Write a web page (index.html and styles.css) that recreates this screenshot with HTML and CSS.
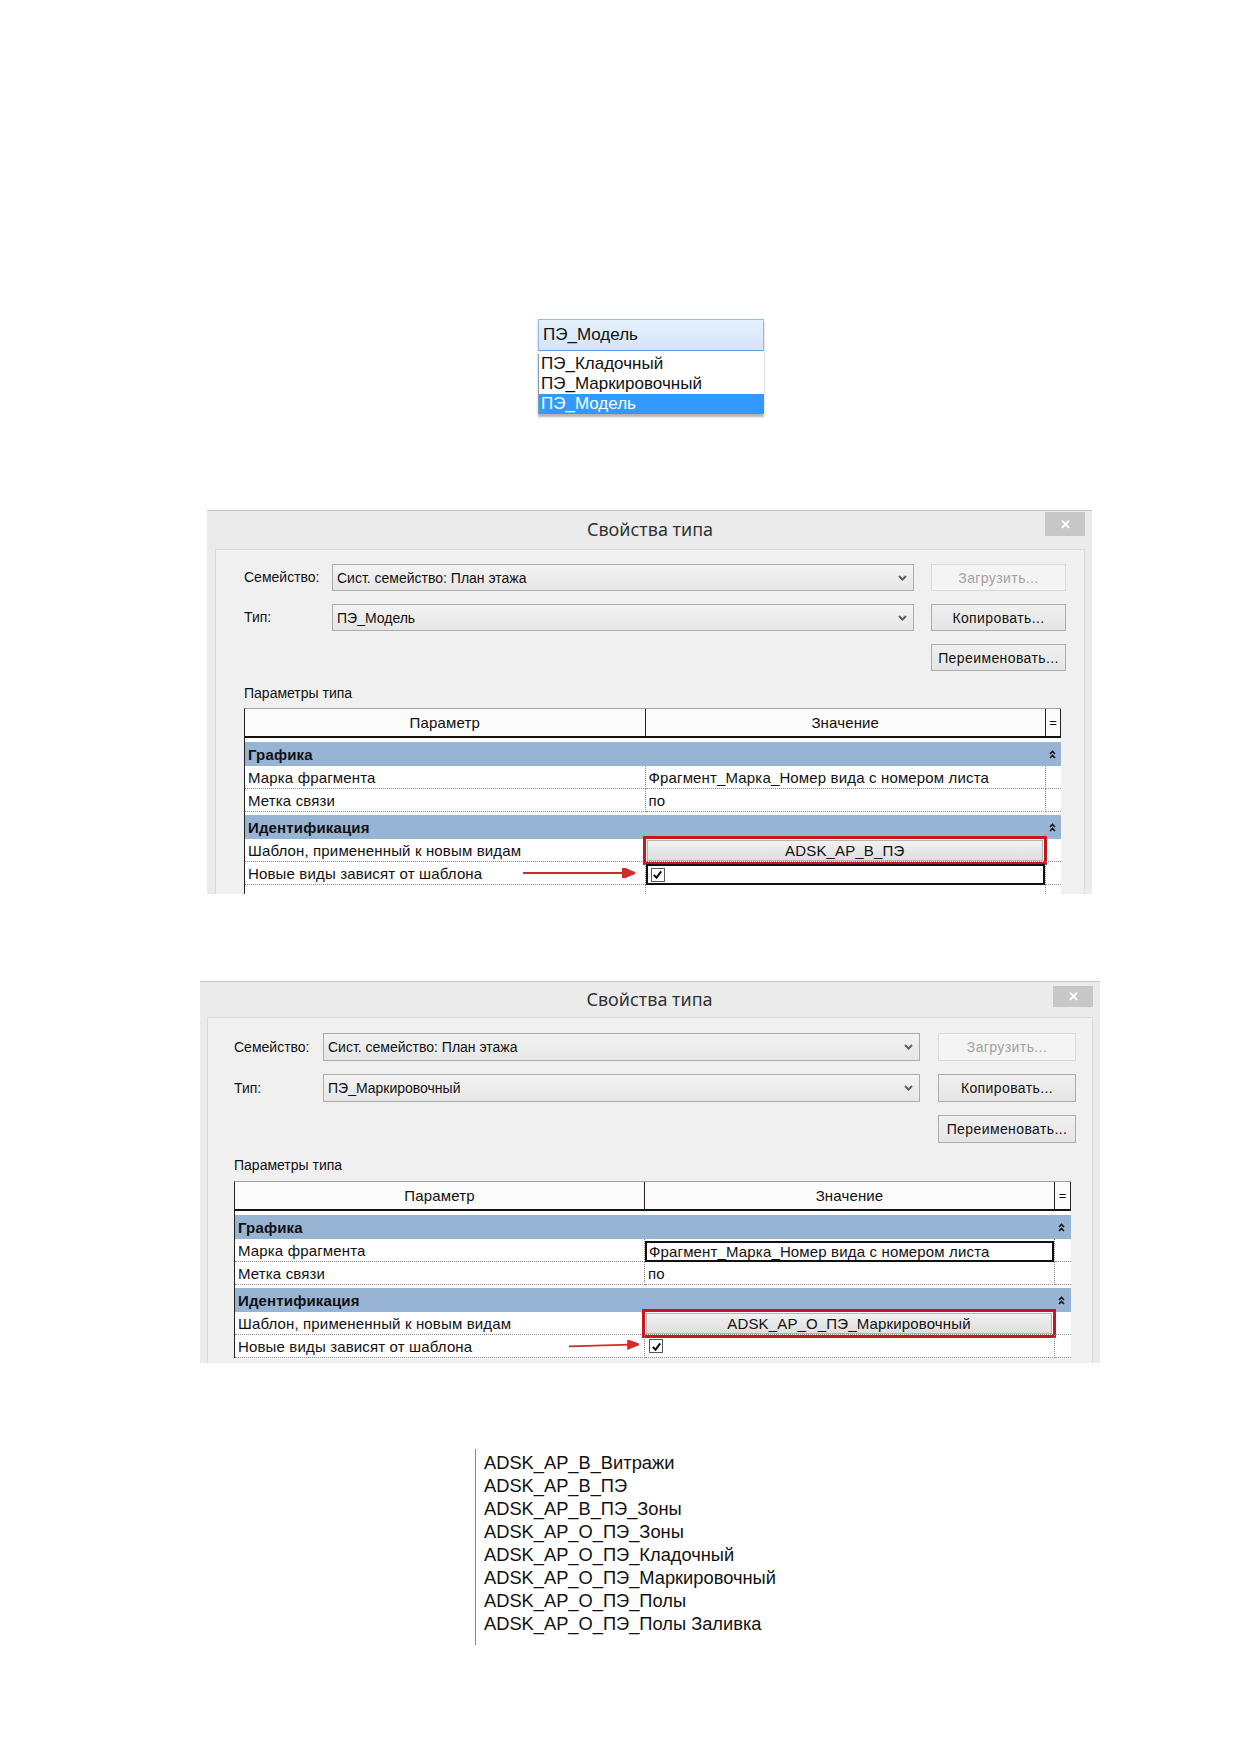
FILE: index.html
```html
<!DOCTYPE html>
<html lang="ru">

<head>
  <meta charset="utf-8">
  <title>Свойства типа</title>
  <link rel="stylesheet" href="styles.css">
</head>

<body>
  <main class="page">
    <!-- type selector, opened -->
    <div class="type-drop">
      <div class="type-drop-current">ПЭ_Модель</div>
      <ul class="type-drop-list">
        <li>ПЭ_Кладочный</li>
        <li>ПЭ_Маркировочный</li>
        <li class="selected">ПЭ_Модель</li>
      </ul>
    </div>

    <!-- type properties: ПЭ_Модель -->
    <section class="dialog dialog-model">
      <header class="dialog-title">
        <span></span>
        <span class="dialog-caption">Свойства типа</span>
        <button class="close-btn">✕</button>
      </header>
      <div class="dialog-body">
        <div class="type-form">
          <span class="form-label">Семейство:</span>
          <div class="combo">
            <span>Сист. семейство: План этажа</span>
            <svg class="combo-arrow" viewBox="0 0 9 6"><path d="M1 1l3.5 3.5L8 1" /></svg>
          </div>
          <button class="btn" disabled>Загрузить...</button>
          <span class="form-label">Тип:</span>
          <div class="combo">
            <span>ПЭ_Модель</span>
            <svg class="combo-arrow" viewBox="0 0 9 6"><path d="M1 1l3.5 3.5L8 1" /></svg>
          </div>
          <button class="btn">Копировать...</button>
          <button class="btn btn-rename">Переименовать...</button>
        </div>

        <div class="params-caption">Параметры типа</div>

        <div class="params">
          <div class="params-head">
            <div class="head-cell">Параметр</div>
            <div class="head-cell">Значение</div>
            <div class="head-cell head-eq">=</div>
          </div>

          <div class="group-row">
            <span>Графика</span>
            <svg class="collapse" viewBox="0 0 7 9"><path d="M1 4l2.5-2.5L6 4M1 8l2.5-2.5L6 8" /></svg>
          </div>
          <div class="param-row">
            <div class="cell">Марка фрагмента</div>
            <div class="cell">Фрагмент_Марка_Номер вида с номером листа</div>
            <div class="cell"></div>
          </div>
          <div class="param-row">
            <div class="cell">Метка связи</div>
            <div class="cell">по</div>
            <div class="cell"></div>
          </div>

          <div class="group-row">
            <span>Идентификация</span>
            <svg class="collapse" viewBox="0 0 7 9"><path d="M1 4l2.5-2.5L6 4M1 8l2.5-2.5L6 8" /></svg>
          </div>
          <div class="param-row">
            <div class="cell">Шаблон, примененный к новым видам</div>
            <div class="cell"><button class="view-template">ADSK_AP_B_ПЭ</button></div>
            <div class="cell"></div>
          </div>
          <div class="param-row">
            <div class="cell cell-flag">
              <span>Новые виды зависят от шаблона</span>
              <svg class="pointer pointer-long" viewBox="0 0 112 10"><path d="M0 5H102" /><polygon points="100,0 112,5 100,10" /></svg>
            </div>
            <div class="cell">
              <div class="edit-box">
                <span class="checkbox"><svg viewBox="0 0 12 12"><path d="M2 6.5l3 3L10 2.5" /></svg></span>
              </div>
            </div>
            <div class="cell"></div>
          </div>
          <div class="param-row">
            <div class="cell"></div>
            <div class="cell"></div>
            <div class="cell"></div>
          </div>
        </div>
      </div>
    </section>

    <!-- type properties: ПЭ_Маркировочный -->
    <section class="dialog dialog-marking">
      <header class="dialog-title">
        <span></span>
        <span class="dialog-caption">Свойства типа</span>
        <button class="close-btn">✕</button>
      </header>
      <div class="dialog-body">
        <div class="type-form">
          <span class="form-label">Семейство:</span>
          <div class="combo">
            <span>Сист. семейство: План этажа</span>
            <svg class="combo-arrow" viewBox="0 0 9 6"><path d="M1 1l3.5 3.5L8 1" /></svg>
          </div>
          <button class="btn" disabled>Загрузить...</button>
          <span class="form-label">Тип:</span>
          <div class="combo">
            <span>ПЭ_Маркировочный</span>
            <svg class="combo-arrow" viewBox="0 0 9 6"><path d="M1 1l3.5 3.5L8 1" /></svg>
          </div>
          <button class="btn">Копировать...</button>
          <button class="btn btn-rename">Переименовать...</button>
        </div>

        <div class="params-caption">Параметры типа</div>

        <div class="params">
          <div class="params-head">
            <div class="head-cell">Параметр</div>
            <div class="head-cell">Значение</div>
            <div class="head-cell head-eq">=</div>
          </div>

          <div class="group-row">
            <span>Графика</span>
            <svg class="collapse" viewBox="0 0 7 9"><path d="M1 4l2.5-2.5L6 4M1 8l2.5-2.5L6 8" /></svg>
          </div>
          <div class="param-row">
            <div class="cell">Марка фрагмента</div>
            <div class="cell">
              <div class="edit-box">Фрагмент_Марка_Номер вида с номером листа</div>
            </div>
            <div class="cell"></div>
          </div>
          <div class="param-row">
            <div class="cell">Метка связи</div>
            <div class="cell">по</div>
            <div class="cell"></div>
          </div>

          <div class="group-row">
            <span>Идентификация</span>
            <svg class="collapse" viewBox="0 0 7 9"><path d="M1 4l2.5-2.5L6 4M1 8l2.5-2.5L6 8" /></svg>
          </div>
          <div class="param-row">
            <div class="cell">Шаблон, примененный к новым видам</div>
            <div class="cell"><button class="view-template">ADSK_AP_O_ПЭ_Маркировочный</button></div>
            <div class="cell"></div>
          </div>
          <div class="param-row">
            <div class="cell cell-flag">
              <span>Новые виды зависят от шаблона</span>
              <svg class="pointer pointer-short" viewBox="0 0 77 10"><path d="M0 6.5L67 4.6" /><polygon points="65,0 77,4.3 65,9" /></svg>
            </div>
            <div class="cell">
              <span class="checkbox"><svg viewBox="0 0 12 12"><path d="M2 6.5l3 3L10 2.5" /></svg></span>
            </div>
            <div class="cell"></div>
          </div>
        </div>
      </div>
    </section>

    <!-- view templates -->
    <ul class="template-list">
      <li>ADSK_AP_B_Витражи</li>
      <li>ADSK_AP_B_ПЭ</li>
      <li>ADSK_AP_B_ПЭ_Зоны</li>
      <li>ADSK_AP_O_ПЭ_Зоны</li>
      <li>ADSK_AP_O_ПЭ_Кладочный</li>
      <li>ADSK_AP_O_ПЭ_Маркировочный</li>
      <li>ADSK_AP_O_ПЭ_Полы</li>
      <li>ADSK_AP_O_ПЭ_Полы Заливка</li>
    </ul>
  </main>
</body>

</html>
```

FILE: styles.css
```css
body {
  margin: 0;
  background-color: white;
  font-family: "Liberation Sans", Arial, sans-serif;
  color: #111;
}

.page {
  display: flex;
  flex-direction: column;
  align-items: flex-start;
  padding-top: 319px;
  padding-bottom: 100px;
}

/* opened type selector */

.type-drop {
  margin-left: 538px;
  width: 226px;
  font-size: 17px;
  box-shadow: 0 3px 2px rgba(0, 0, 0, 0.3);
}

.type-drop-current {
  height: 30px;
  line-height: 30px;
  padding-left: 4px;
  border: 1px solid #8fbbe9;
  border-bottom-color: #5f9bdc;
  background: linear-gradient(#e7f1fd, #d3e5fa);
}

.type-drop-list {
  list-style: none;
  margin: 3px 0 0 0;
  padding: 0;
  border-left: 1px solid #7f9db9;
  background-color: white;
}

.type-drop-list li {
  height: 20px;
  line-height: 20px;
  padding-left: 2px;
}

.type-drop-list .selected {
  background-color: #3399ff;
  color: white;
}

/* dialog window */

.dialog {
  height: 383px;
  overflow: hidden;
  border-top: 1px solid #c6c6c6;
  background-color: #ebebeb;
  display: flex;
  flex-direction: column;
}

.dialog-model {
  margin-top: 96px;
  margin-left: 207px;
  width: 885px;
}

.dialog-marking {
  margin-top: 87px;
  margin-left: 200px;
  width: 900px;
  height: 381px;
}

.dialog-title {
  flex-shrink: 0;
  display: grid;
  grid-template-columns: 1fr auto 1fr;
  align-items: start;
  height: 38px;
  padding: 1px 7px 0 0;
  box-sizing: border-box;
}

.dialog-marking .dialog-title {
  height: 35px;
  padding-top: 4px;
}

.dialog-caption {
  font-family: "Noto Sans", "Open Sans", sans-serif;
  font-size: 18px;
  color: #333;
  padding: 5px 0 0 8px;
}

.dialog-marking .dialog-caption {
  padding-top: 1px;
  padding-left: 6px;
}

.close-btn {
  justify-self: end;
  width: 40px;
  height: 24px;
  border: none;
  background-color: #c7c7c7;
  color: white;
  font-size: 13px;
  font-weight: bold;
  padding: 0;
}

.dialog-marking .close-btn {
  height: 21px;
}

.dialog-body {
  flex-shrink: 0;
  margin: 0 7px 0 8px;
  padding: 14px 18px 40px 28px;
  border: 1px solid #d9d9d9;
  border-bottom: none;
  background-color: #f0f0f0;
  font-size: 14px;
}

.dialog-marking .dialog-body {
  margin-left: 7px;
  padding: 15px 16px 40px 26px;
}

/* family / type form */

.type-form {
  display: grid;
  grid-template-columns: 88px 1fr 135px;
  grid-auto-rows: 27px;
  column-gap: 17px;
  row-gap: 13px;
  align-items: center;
}

.dialog-marking .type-form {
  grid-template-columns: 89px 1fr 138px;
  grid-auto-rows: 28px;
  column-gap: 18px;
  row-gap: 13px;
}

.form-label {
  margin-top: -1px;
}

.combo {
  height: 100%;
  box-sizing: border-box;
  display: flex;
  align-items: center;
  justify-content: space-between;
  padding: 0 6px 0 4px;
  border: 1px solid #acacac;
  background: linear-gradient(#f3f3f3, #e6e6e6);
  margin-left: -17px;
}

.dialog-marking .combo {
  margin-left: -18px;
}

.combo-arrow {
  width: 9px;
  height: 6px;
  fill: none;
  stroke: #606060;
  stroke-width: 2;
}

.btn {
  height: 100%;
  border: 1px solid #acacac;
  background: linear-gradient(#f0f0f0, #e5e5e5);
  font-family: inherit;
  font-size: 14px;
  letter-spacing: 0.4px;
  color: #111;
  padding: 0;
}

.btn:disabled {
  border-color: #d9d9d9;
  background: #f4f4f4;
  color: #a2a2a2;
}

.btn-rename {
  grid-column: 3;
}

.params-caption {
  margin-top: 13px;
  height: 18px;
  line-height: 18px;
}

/* parameter grid */

.params {
  margin-top: 6px;
  margin-right: 5px;
  border-top: 1px solid #a0a0a0;
  border-left: 1px solid #222;
  background-color: white;
  color: #111;
  font-size: 15px;
  letter-spacing: 0.15px;
}

.dialog-marking .params {
  margin-top: 7px;
}

.params-head,
.param-row,
.group-row {
  display: grid;
  grid-template-columns: 1fr 1fr 15px;
}

.dialog-marking .params-head,
.dialog-marking .param-row,
.dialog-marking .group-row {
  grid-template-columns: 1fr 1fr 16px;
}

.params-head {
  height: 27px;
  border-bottom: 2px solid #111;
  background-color: #fbfbfb;
  margin-bottom: 4px;
}

.head-cell {
  display: flex;
  align-items: center;
  justify-content: center;
  border-right: 1px solid #222;
}

.head-eq {
  border-left: 1px solid #222;
  margin-left: -1px;
  font-size: 13px;
}

.group-row {
  height: 24px;
  align-items: center;
  margin-top: 3px;
  background-color: #98b4d4;
  font-weight: bold;
}

.params-head + .group-row {
  margin-top: 0;
}

.group-row span {
  grid-column: 1 / 3;
  padding-left: 3px;
}

.collapse {
  width: 7px;
  height: 9px;
  fill: none;
  stroke: #111;
  stroke-width: 1.6;
  margin-left: 3px;
}

.param-row {
  height: 23px;
}

.cell {
  display: flex;
  align-items: center;
  padding-left: 3px;
  border-bottom: 1px dotted #8a8a8a;
  border-right: 1px dotted #8a8a8a;
  white-space: nowrap;
  min-width: 0;
}

.cell:last-child {
  border-right: none;
}

.cell-flag {
  justify-content: space-between;
}

.pointer {
  height: 10px;
  stroke: #d22a2a;
  stroke-width: 2;
  fill: #d22a2a;
}

.pointer-long {
  width: 112px;
  margin-right: 10px;
}

.pointer-short {
  width: 70px;
  margin-right: 5px;
  margin-top: -3px;
}

.view-template {
  width: 100%;
  height: 21px;
  margin: 1px 2px 0 -2px;
  padding: 0;
  border: 1px solid #b4b4b4;
  background: linear-gradient(#f2f2f2, #dedede);
  outline: 3px solid #c8161d;
  outline-offset: 1px;
  font-family: inherit;
  font-size: 15px;
  letter-spacing: 0.15px;
  color: #111;
}

.edit-box {
  flex: 1;
  align-self: stretch;
  display: flex;
  align-items: center;
  margin: 2px 0 -1px -3px;
  padding-left: 2px;
  border: 2px solid #111;
  white-space: nowrap;
}

.checkbox {
  width: 14px;
  height: 14px;
  box-sizing: border-box;
  border: 1px solid #555;
  background-color: white;
  display: flex;
  align-items: center;
  justify-content: center;
  margin-left: 1px;
}

.checkbox svg {
  width: 11px;
  height: 11px;
  fill: none;
  stroke: #111;
  stroke-width: 2.2;
}

/* view template names */

.template-list {
  list-style: none;
  margin: 86px 0 0 475px;
  padding: 2px 0 10px 8px;
  border-left: 1px solid #888;
  font-size: 18.3px;
  line-height: 23px;
  color: #111;
}
```
